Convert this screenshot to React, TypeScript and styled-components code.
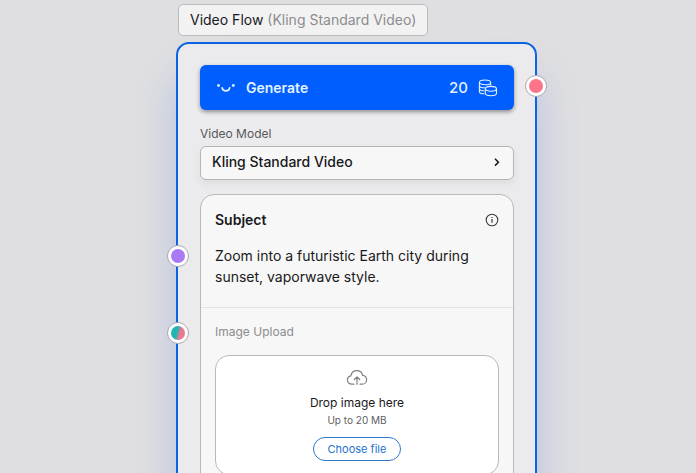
import React, { useState } from "react";
import styled, { createGlobalStyle } from "styled-components";

const GlobalStyle = createGlobalStyle`
  *, *::before, *::after { box-sizing: border-box; }
  body { margin: 0; background: #dfdfe1; }
  button, textarea { font: inherit; color: inherit; }
`;

const Canvas = styled.main`
  height: 100vh;
  overflow: hidden;
  display: flex;
  flex-direction: column;
  align-items: stretch;
  gap: 6px;
  padding: 4px 159px 0 176px;
  background: #dfdfe1;
  color: #19191b;
  font-family: Inter, "Liberation Sans", sans-serif;
  font-size: 14px;
  line-height: 20px;
`;

const NodeTitle = styled.h1`
  align-self: flex-start;
  flex: none;
  margin: 0 0 0 2px;
  padding: 5px 11px;
  border: 1px solid #b9b9bb;
  border-radius: 5px;
  background: #f2f2f3;
  font-size: 14px;
  font-weight: 400;
  line-height: 20px;
  white-space: nowrap;
`;

const Muted = styled.span`
  color: #8c8c8e;
`;

const Node = styled.section`
  position: relative;
  flex: none;
  display: flex;
  flex-direction: column;
  padding: 21px 21px 24px 22px;
  border: 2px solid #0c62e0;
  border-radius: 13px;
  background: #ebebed;
  box-shadow: 0 36px 40px rgba(80, 115, 235, 0.28);
`;

const GenerateButton = styled.button`
  display: flex;
  align-items: center;
  gap: 10px;
  height: 45px;
  padding: 0 16px;
  border: 0;
  border-radius: 6px;
  background: #005eff;
  color: #e2f3ff;
  font-weight: 600;
  box-shadow: 0 2px 4px rgba(0, 0, 0, 0.4);
`;

const Cost = styled.span`
  margin-left: auto;
  font-size: 15px;
  font-weight: 500;
`;

const FieldLabel = styled.label`
  margin-top: 15px;
  color: #58585b;
  font-size: 12px;
  line-height: 18px;
`;

const ModelButton = styled.button`
  display: flex;
  align-items: center;
  justify-content: space-between;
  height: 34px;
  margin-top: 3px;
  padding: 0 11px 2px;
  border: 1px solid #b5b5b8;
  border-radius: 6px;
  background: #f7f7f8;
  font-weight: 500;
  box-shadow: 0 4px 8px rgba(0, 0, 0, 0.06);
`;

const Card = styled.div`
  margin-top: 14px;
  border: 1px solid #b9b9bb;
  border-radius: 14px;
  background: #f7f7f7;
`;

const CardSection = styled.div`
  display: flex;
  flex-direction: column;
  padding: 14px 14px 16px;

  & + & {
    border-top: 1px solid #e4e4e5;
  }
`;

const SectionHead = styled.div`
  display: flex;
  align-items: center;
  justify-content: space-between;
  height: 22px;
`;

const SubjectLabel = styled.label`
  font-weight: 600;
`;

const InfoButton = styled.button`
  display: flex;
  padding: 0;
  border: 0;
  background: none;
`;

const Prompt = styled.textarea`
  display: block;
  height: 46px;
  margin: 14px 0 0;
  padding: 0;
  border: 0;
  outline: none;
  resize: none;
  overflow: hidden;
  background: none;
  line-height: 21px;
`;

const UploadTitle = styled.h2`
  margin: 0 0 14px;
  color: #8c8c8e;
  font-size: 12px;
  font-weight: 400;
  line-height: 19px;
`;

const DropZone = styled.div`
  display: flex;
  flex-direction: column;
  align-items: center;
  padding: 13px 12px;
  border: 1px solid #b9b9bb;
  border-radius: 14px;
  background: #fff;
`;

const DropText = styled.p`
  margin: 7px 0 0;
  font-size: 12px;
  line-height: 18px;
`;

const DropHint = styled.p`
  margin: 0;
  color: #5e5e61;
  font-size: 10px;
  line-height: 16px;
`;

const FileButton = styled.button`
  height: 24px;
  margin-top: 9px;
  padding: 0 14px;
  border: 1px solid #2f76cc;
  border-radius: 12px;
  background: #fff;
  color: #2472cd;
  font-size: 11px;
  line-height: 20px;
`;

const Port = styled.span<{ $side: "left" | "right"; $top: number; $fill: string }>`
  position: absolute;
  top: ${(p) => p.$top}px;
  ${(p) => p.$side}: ${(p) => (p.$side === "left" ? "-11px" : "-12px")};
  width: 22px;
  height: 22px;
  border: 1px solid #aaa9b3;
  border-radius: 50%;
  background: #fff;

  &::before {
    content: "";
    position: absolute;
    inset: 3px;
    border-radius: 50%;
    background: ${(p) => p.$fill};
  }
`;

const SmileIcon = () => (
  <svg width="20" height="10" viewBox="0 0 20 10" fill="none" aria-hidden="true">
    <circle cx="2.5" cy="2.5" r="1.4" fill="currentColor" />
    <circle cx="17.3" cy="2.5" r="1.4" fill="currentColor" />
    <path d="M6.2 4.8C6.8 8.9 13 8.9 13.6 4.8" stroke="currentColor" strokeWidth="1.7" strokeLinecap="round" />
  </svg>
);

const CoinsIcon = () => (
  <svg width="20" height="18" viewBox="0 0 20 18" fill="none" stroke="currentColor" strokeWidth="1.1" aria-hidden="true">
    <ellipse cx="7" cy="3.4" rx="5.6" ry="2.4" />
    <path d="M1.4 3.4v9c0 1.3 2.2 2.4 5 2.4M12.6 3.4v3.2M1.4 6.4c0 1.4 2.4 2.4 5.4 2.4M1.4 9.4c0 1.4 2.2 2.4 5 2.4" />
    <ellipse cx="12.9" cy="9.8" rx="5.6" ry="2.4" />
    <path d="M7.3 9.8v4.5c0 1.4 2.5 2.5 5.6 2.5s5.6-1.1 5.6-2.5V9.8" />
  </svg>
);

const ChevronIcon = () => (
  <svg width="10" height="10" viewBox="0 0 10 10" fill="none" stroke="currentColor" strokeWidth="1.5" aria-hidden="true">
    <path d="M3 1.8 6.4 5.2 3 8.6" />
  </svg>
);

const InfoIcon = () => (
  <svg width="14" height="14" viewBox="0 0 14 14" fill="none" stroke="#3b3b3d" aria-hidden="true">
    <circle cx="7" cy="7" r="5.8" strokeWidth="1.1" />
    <path d="M7 6v3.8M7 3.9v1.2" strokeWidth="1.2" />
  </svg>
);

const CloudIcon = () => (
  <svg width="22" height="18" viewBox="0 0 22 18" fill="none" stroke="#808083" strokeWidth="1.2" strokeLinecap="round" strokeLinejoin="round" aria-hidden="true">
    <path d="M8 15.2H5.8C3.3 15.2 1.4 13.3 1.4 11c0-2.2 1.5-3.8 3.5-4.1C5.4 3.7 7.8 1.7 10.8 1.7c2.9 0 5.2 1.9 5.8 4.6 2.4.2 4 2 4 4.4 0 2.6-1.9 4.5-4.4 4.5H14" />
    <path d="M11 15.2V8M8.3 10.5 11 7.8l2.7 2.7" />
  </svg>
);

export default function App() {
  const [prompt, setPrompt] = useState(
    "Zoom into a futuristic Earth city during sunset, vaporwave style."
  );

  return (
    <>
      <GlobalStyle />
      <Canvas>
        <NodeTitle>
          Video Flow <Muted>(Kling Standard Video)</Muted>
        </NodeTitle>
        <Node>
          <GenerateButton type="button">
            <SmileIcon />
            Generate
            <Cost>20</Cost>
            <CoinsIcon />
          </GenerateButton>
          <FieldLabel htmlFor="model">Video Model</FieldLabel>
          <ModelButton id="model" type="button">
            Kling Standard Video
            <ChevronIcon />
          </ModelButton>
          <Card>
            <CardSection>
              <SectionHead>
                <SubjectLabel htmlFor="subject">Subject</SubjectLabel>
                <InfoButton type="button" aria-label="About the subject">
                  <InfoIcon />
                </InfoButton>
              </SectionHead>
              <Prompt
                id="subject"
                spellCheck={false}
                value={prompt}
                onChange={(e) => setPrompt(e.target.value)}
              />
            </CardSection>
            <CardSection>
              <UploadTitle>Image Upload</UploadTitle>
              <DropZone>
                <CloudIcon />
                <DropText>Drop image here</DropText>
                <DropHint>Up to 20 MB</DropHint>
                <FileButton type="button">Choose file</FileButton>
              </DropZone>
            </CardSection>
          </Card>
          <Port $side="right" $top={31} $fill="#fb748a" />
          <Port $side="left" $top={201} $fill="#ab79f8" />
          <Port $side="left" $top={278} $fill="linear-gradient(105deg, #1fb5b5 42%, #e87a90 62%)" />
        </Node>
      </Canvas>
    </>
  );
}
